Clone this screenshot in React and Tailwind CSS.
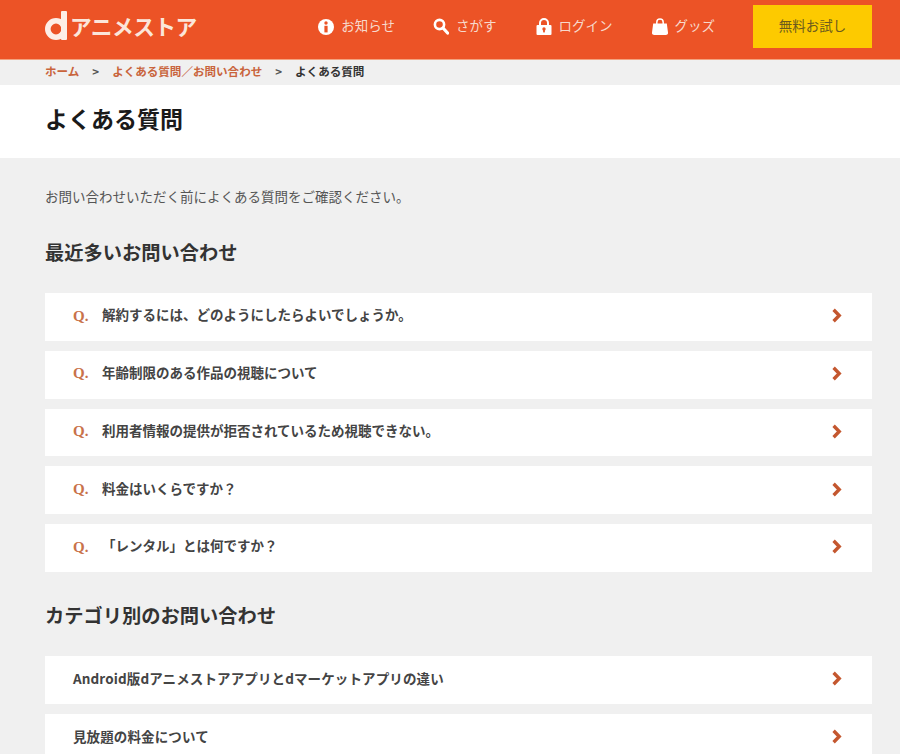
const FONT = "font-['Noto_Sans_CJK_JP','Noto_Sans',sans-serif]";

const QUESTIONS = [
  '解約するには、どのようにしたらよいでしょうか。',
  '年齢制限のある作品の視聴について',
  '利用者情報の提供が拒否されているため視聴できない。',
  '料金はいくらですか？',
  '「レンタル」とは何ですか？',
];

const CATEGORIES = ['Android版dアニメストアアプリとdマーケットアプリの違い', '見放題の料金について'];

function InfoIcon() {
  return (
    <svg width="16" height="16" viewBox="0 0 16 16">
      <circle cx="8" cy="8" r="8" fill="#fff" />
      <circle cx="8" cy="4" r="1.7" fill="#ec5326" />
      <rect x="6.4" y="6.8" width="3.2" height="6.6" fill="#ec5326" />
    </svg>
  );
}

function SearchIcon() {
  return (
    <svg width="16" height="17" viewBox="0 0 16 17" fill="none" stroke="#fff">
      <circle cx="6.5" cy="6.5" r="4.6" strokeWidth="2.6" />
      <path d="M10 10l4.6 5" strokeWidth="3.2" strokeLinecap="round" />
    </svg>
  );
}

function LockIcon() {
  return (
    <svg width="16" height="17" viewBox="0 0 16 17">
      <path d="M4 8V5a4 4 0 0 1 8 0v3" fill="none" stroke="#fff" strokeWidth="2" />
      <rect x="0.5" y="7" width="15" height="10" rx="1" fill="#fff" />
      <circle cx="8" cy="11" r="1.7" fill="#ec5326" />
      <rect x="7.1" y="11" width="1.8" height="3.4" fill="#ec5326" />
    </svg>
  );
}

function BagIcon() {
  return (
    <svg width="16" height="17" viewBox="0 0 16 17">
      <path d="M4.8 7V4.2a3.2 3.2 0 0 1 6.4 0V7" fill="none" stroke="#fff" strokeWidth="1.5" />
      <path d="M1.2 5.6h13.6L16 14.5a2.2 2.2 0 0 1-2.2 2.5H2.2A2.2 2.2 0 0 1 0 14.5z" fill="#fff" />
    </svg>
  );
}

function Chevron() {
  return (
    <svg width="10" height="15" viewBox="0 0 10 15" fill="none" className="shrink-0 mb-[2px]">
      <path d="M1.6 1.8L7.2 7.5L1.6 13.2" stroke="#c4572f" strokeWidth="3.4" />
    </svg>
  );
}

function NavItem({ icon, label }) {
  return (
    <div className="flex items-center gap-[7px] text-[13.5px] text-[#f7d9cc]">
      {icon}
      <span className="pb-[2px]">{label}</span>
    </div>
  );
}

export default function App() {
  return (
    <div className={`h-[754px] overflow-hidden bg-[#f0f0f0] text-[#333] ${FONT}`}>
      {/* Header */}
      <header className="h-[60px] bg-[#ec5326] border-b border-[#f3a27f] pl-[45px] pr-[28px] flex items-center">
        <div className="flex items-center pb-[8px]">
          <svg width="22" height="29" viewBox="0 0 22 29">
            <circle cx="11" cy="18" r="8.2" fill="none" stroke="#fdeee6" strokeWidth="5.6" />
            <rect x="16" y="0" width="6" height="29" rx="1" fill="#fdeee6" />
          </svg>
          <span className="ml-[3px] text-[21.7px] leading-none font-bold tracking-[-0.5px] text-[#fbe6da]">アニメストア</span>
        </div>
        <nav className="ml-auto flex items-center pb-[6px]">
          <div className="mr-[38px]"><NavItem icon={<InfoIcon />} label="お知らせ" /></div>
          <div className="mr-[39px]"><NavItem icon={<SearchIcon />} label="さがす" /></div>
          <div className="mr-[39px]"><NavItem icon={<LockIcon />} label="ログイン" /></div>
          <div className="mr-[38px]"><NavItem icon={<BagIcon />} label="グッズ" /></div>
          <button className="w-[119px] h-[43px] pb-[2px] bg-[#fdca00] text-[13.5px] text-[#6b5a1e]">無料お試し</button>
        </nav>
      </header>

      {/* Breadcrumb */}
      <div className="h-[25px] pl-[45px] pb-[2px] flex items-center text-[11.55px] font-bold">
        <span className="text-[#c9643c]">ホーム</span>
        <span className="mx-[13px] text-[#555]">&gt;</span>
        <span className="text-[#c9643c]">よくある質問／お問い合わせ</span>
        <span className="mx-[13px] text-[#555]">&gt;</span>
        <span className="text-[#333]">よくある質問</span>
      </div>

      {/* Title */}
      <div className="h-[73px] bg-white pl-[45px] pb-[6px] flex items-center">
        <h1 className="text-[23px] font-bold text-[#1a1a1a]">よくある質問</h1>
      </div>

      <main className="pr-[28px] pl-[45px]">
        <p className="mt-[28px] text-[13.5px] leading-[20px] text-[#555]">お問い合わせいただく前によくある質問をご確認ください。</p>

        <h2 className="mt-[32px] text-[19.25px] leading-[28px] font-bold">最近多いお問い合わせ</h2>
        <div className="mt-[27px] flex flex-col gap-[10px]">
          {QUESTIONS.map((q) => (
            <div key={q} className="h-[47.75px] bg-white pl-[28px] pr-[30px] flex items-center">
              <span className="w-[29px] pb-[2px] text-[15px] font-bold font-['Liberation_Serif',serif] text-[#c9724a]">Q.</span>
              <span className="flex-1 pb-[5px] text-[13.5px] font-bold text-[#444]">{q}</span>
              <Chevron />
            </div>
          ))}
        </div>

        <h2 className="mt-[29px] text-[19.25px] leading-[28px] font-bold">カテゴリ別のお問い合わせ</h2>
        <div className="mt-[27px] flex flex-col gap-[10px]">
          {CATEGORIES.map((c) => (
            <div key={c} className="h-[47.75px] bg-white pl-[28px] pr-[30px] flex items-center">
              <span className="flex-1 pb-[3px] text-[13.5px] font-bold tracking-[0.12px] text-[#444]">{c}</span>
              <Chevron />
            </div>
          ))}
        </div>
      </main>
    </div>
  );
}
